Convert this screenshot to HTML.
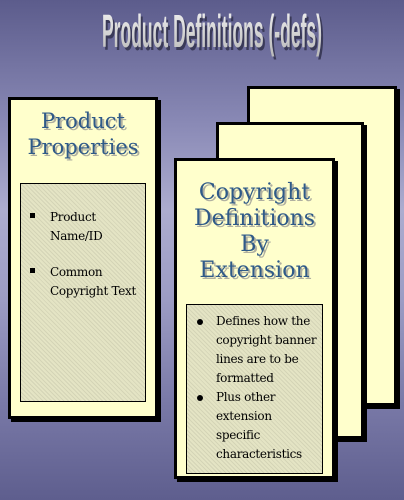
<!DOCTYPE html>
<html><head><meta charset="utf-8"><style>
html,body{margin:0;padding:0}
body{width:404px;height:500px;position:relative;overflow:hidden;
background:linear-gradient(180deg,#5c5c8c 0%,#8a8ab6 25%,#acaccf 42%,#9c9cc4 60%,#7a7aa8 80%,#5e5e8e 100%);
font-family:"DejaVu Serif",serif}
.card{position:absolute;background:#ffffcc;border:3px solid #000;box-shadow:3px 3px 0 #000;box-sizing:border-box}
.inner{position:absolute;border:1px solid #000;box-sizing:border-box;
background-color:#e4e4c4;background-image:repeating-linear-gradient(45deg,rgba(0,0,0,.07) 0 1px,transparent 1px 3px)}
.head{position:absolute;text-align:center;color:#2f5a88;font-family:"DejaVu Serif",serif;font-size:21px;line-height:26px;text-shadow:2px 2px 0 #b0b0a0;white-space:nowrap}
.li{position:absolute;font-family:"DejaVu Serif",serif;font-size:12px;line-height:19px;color:#000;white-space:nowrap;letter-spacing:-0.3px}
.sq{position:absolute;width:5px;height:5px;background:#000}
.dot{position:absolute;width:6px;height:6px;border-radius:50%;background:#000}
</style></head><body>
<svg style="position:absolute;left:0;top:0" width="404" height="80">
<defs><linearGradient id="g" x1="0" y1="0" x2="0" y2="1"><stop offset="0" stop-color="#f4f4f4"/><stop offset="1" stop-color="#b8b8b8"/></linearGradient></defs>
<text x="104" y="50" font-family="Liberation Sans, sans-serif" font-weight="bold" font-size="46" textLength="220" lengthAdjust="spacingAndGlyphs" fill="#3a3a58">Product Definitions (-defs)</text>
<text x="102" y="47" font-family="Liberation Sans, sans-serif" font-weight="bold" font-size="46" textLength="220" lengthAdjust="spacingAndGlyphs" fill="url(#g)">Product Definitions (-defs)</text>
</svg>

<div class="card" style="left:247px;top:86px;width:150px;height:320px"></div>
<div class="card" style="left:216px;top:122px;width:148px;height:317px"></div>

<div class="card" style="left:8px;top:97px;width:150px;height:322px"></div>
<div class="head" style="left:8px;width:150px;top:108px">Product<br>Properties</div>
<div class="inner" style="left:20px;top:183px;width:126px;height:219px"></div>
<div class="sq" style="left:30px;top:213px"></div>
<div class="li" style="left:50px;top:208px">Product<br>Name/ID</div>
<div class="sq" style="left:30px;top:268px"></div>
<div class="li" style="left:50px;top:263px">Common<br>Copyright Text</div>

<div class="card" style="left:174px;top:158px;width:161px;height:321px"></div>
<div class="head" style="left:174px;width:161px;top:180px;font-size:22px">Copyright<br>Definitions<br>By<br>Extension</div>
<div class="inner" style="left:186px;top:304px;width:137px;height:170px"></div>
<div class="dot" style="left:197px;top:319px"></div>
<div class="li" style="left:216px;top:312px">Defines how the<br>copyright banner<br>lines are to be<br>formatted</div>
<div class="dot" style="left:197px;top:395px"></div>
<div class="li" style="left:216px;top:388px">Plus other<br>extension<br>specific<br>characteristics</div>
</body></html>
